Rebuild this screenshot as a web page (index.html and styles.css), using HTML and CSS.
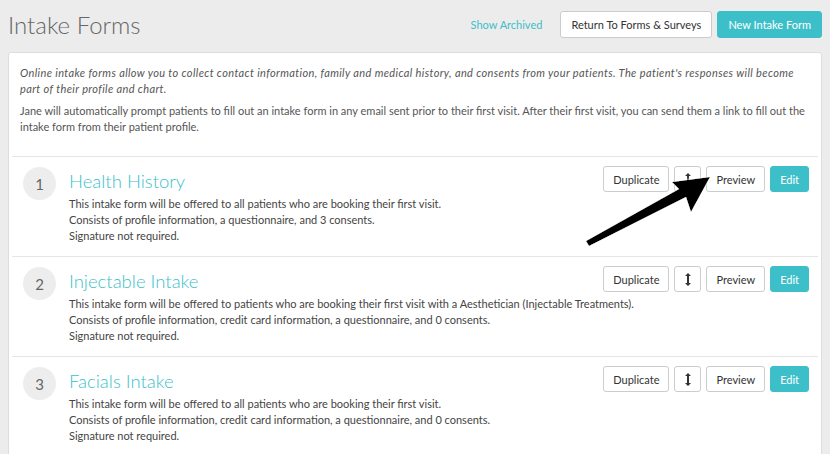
FILE: index.html
```html
<!DOCTYPE html>
<html lang="en">
<head>
    <meta charset="UTF-8">
    <meta name="viewport" content="width=device-width, initial-scale=1.0">
    <title>Intake Forms</title>
    <link rel="stylesheet" href="styles.css">
</head>
<body>
    <header class="page-header">
        <h1>Intake Forms</h1>
        <div class="header-actions">
            <a href="#" class="link">Show Archived</a>
            <a href="#" class="btn">Return To Forms &amp; Surveys</a>
            <a href="#" class="btn btn-primary">New Intake Form</a>
        </div>
    </header>

    <div class="panel">
        <div class="intro">
            <p class="note">Online intake forms allow you to collect contact information, family and medical history, and consents from your patients. The patient's responses will become part of their profile and chart.</p>
            <p>Jane will automatically prompt patients to fill out an intake form in any email sent prior to their first visit. After their first visit, you can send them a link to fill out the intake form from their patient profile.</p>
        </div>

        <ul class="forms">
            <li class="form-row">
                <span class="num">1</span>
                <div class="form-info">
                    <div class="form-head">
                        <h2>Health History</h2>
                        <div class="row-actions">
                            <a href="#" class="btn btn-sm">Duplicate</a>
                            <a href="#" class="btn btn-sm btn-icon"><svg width="6" height="13" viewBox="0 0 6 13"><path d="M3 0 L6 3 H4 V10 H6 L3 13 L0 10 H2 V3 H0 Z" fill="#333"/></svg></a>
                            <a href="#" class="btn btn-sm">Preview</a>
                            <a href="#" class="btn btn-sm btn-primary">Edit</a>
                        </div>
                    </div>
                    <p>This intake form will be offered to all patients who are booking their first visit.</p>
                    <p>Consists of profile information, a questionnaire, and 3 consents.</p>
                    <p>Signature not required.</p>
                </div>
            </li>
            <li class="form-row">
                <span class="num">2</span>
                <div class="form-info">
                    <div class="form-head">
                        <h2>Injectable Intake</h2>
                        <div class="row-actions">
                            <a href="#" class="btn btn-sm">Duplicate</a>
                            <a href="#" class="btn btn-sm btn-icon"><svg width="6" height="13" viewBox="0 0 6 13"><path d="M3 0 L6 3 H4 V10 H6 L3 13 L0 10 H2 V3 H0 Z" fill="#333"/></svg></a>
                            <a href="#" class="btn btn-sm">Preview</a>
                            <a href="#" class="btn btn-sm btn-primary">Edit</a>
                        </div>
                    </div>
                    <p>This intake form will be offered to patients who are booking their first visit with a Aesthetician (Injectable Treatments).</p>
                    <p>Consists of profile information, credit card information, a questionnaire, and 0 consents.</p>
                    <p>Signature not required.</p>
                </div>
            </li>
            <li class="form-row">
                <span class="num">3</span>
                <div class="form-info">
                    <div class="form-head">
                        <h2>Facials Intake</h2>
                        <div class="row-actions">
                            <a href="#" class="btn btn-sm">Duplicate</a>
                            <a href="#" class="btn btn-sm btn-icon"><svg width="6" height="13" viewBox="0 0 6 13"><path d="M3 0 L6 3 H4 V10 H6 L3 13 L0 10 H2 V3 H0 Z" fill="#333"/></svg></a>
                            <a href="#" class="btn btn-sm">Preview</a>
                            <a href="#" class="btn btn-sm btn-primary">Edit</a>
                        </div>
                    </div>
                    <p>This intake form will be offered to all patients who are booking their first visit.</p>
                    <p>Consists of profile information, credit card information, a questionnaire, and 0 consents.</p>
                    <p>Signature not required.</p>
                </div>
            </li>
        </ul>
    </div>

    <!-- pointer arrow callout -->
    <svg class="callout" width="830" height="454" viewBox="0 0 830 454">
        <defs>
            <filter id="shadow" x="-10%" y="-10%" width="120%" height="120%">
                <feDropShadow dx="0" dy="0" stdDeviation="1.5" flood-color="#fff" flood-opacity="1"/>
            </filter>
        </defs>
        <polygon points="589,246 586,241 679,189 672,182 710,177 691,212 686,197" fill="#000" filter="url(#shadow)"/>
    </svg>
</body>
</html>
```

FILE: styles.css
```css
body {
    font-family: 'Lato', 'Open Sans', sans-serif;
    margin: 0;
    padding: 0 8px;
    background: #ececec;
    color: #555;
    position: relative;
    height: 454px;
    overflow: hidden;
}

.page-header {
    display: flex;
    justify-content: space-between;
    align-items: center;
    height: 52px;
    padding-bottom: 4px;
    box-sizing: border-box;
}

.page-header h1 {
    margin: 0;
    font-size: 24px;
    font-weight: 300;
    color: #666;
}

.header-actions {
    display: flex;
    align-items: center;
    gap: 5px;
}

.link {
    color: #3cbfc8;
    text-decoration: none;
    font-size: 11px;
    margin-right: 13px;
}

.btn {
    display: inline-flex;
    align-items: center;
    justify-content: center;
    height: 27px;
    padding: 0 10px;
    box-sizing: border-box;
    background: white;
    border: 1px solid #ccc;
    border-radius: 3px;
    color: #333;
    font-size: 11px;
    text-decoration: none;
}

.btn-primary {
    background: #3dbfc9;
    border-color: #3dbfc9;
    color: white;
}

.panel {
    background: white;
    border: 1px solid #ddd;
    border-radius: 3px;
    min-height: 420px;
}

.intro {
    padding: 12px 11px 15px;
    font-size: 11px;
    line-height: 16px;
    color: #555;
}

.intro p {
    margin: 0 0 6px;
}

.intro .note {
    font-style: italic;
    letter-spacing: 0.38px;
}

.forms {
    list-style: none;
    margin: 0 3px;
    padding: 0;
}

.form-row {
    display: flex;
    align-items: flex-start;
    height: 100px;
    box-sizing: border-box;
    border-top: 1px solid #e6e6e6;
    padding: 9px 9px 0 11px;
}

.num {
    flex: none;
    width: 33px;
    height: 33px;
    border-radius: 50%;
    background: #ededed;
    color: #666;
    font-size: 15px;
    display: flex;
    align-items: center;
    justify-content: center;
    margin-top: 1px;
}

.form-info {
    flex: 1;
    margin-left: 13px;
}

.form-head {
    display: flex;
    justify-content: space-between;
    align-items: flex-start;
    height: 30px;
}

.form-head h2 {
    margin: 3px 0 0;
    font-size: 18.5px;
    font-weight: 300;
    line-height: 24px;
    color: #3cbfc8;
}

.form-info p {
    margin: 0;
    font-size: 11px;
    line-height: 16px;
    color: #444;
}

.row-actions {
    display: flex;
    gap: 5px;
}

.btn-sm {
    height: 26px;
    padding: 0 9px;
}

.btn-icon {
    width: 27px;
    padding: 0;
}

.callout {
    position: absolute;
    top: 0;
    left: 0;
    pointer-events: none;
}
```
